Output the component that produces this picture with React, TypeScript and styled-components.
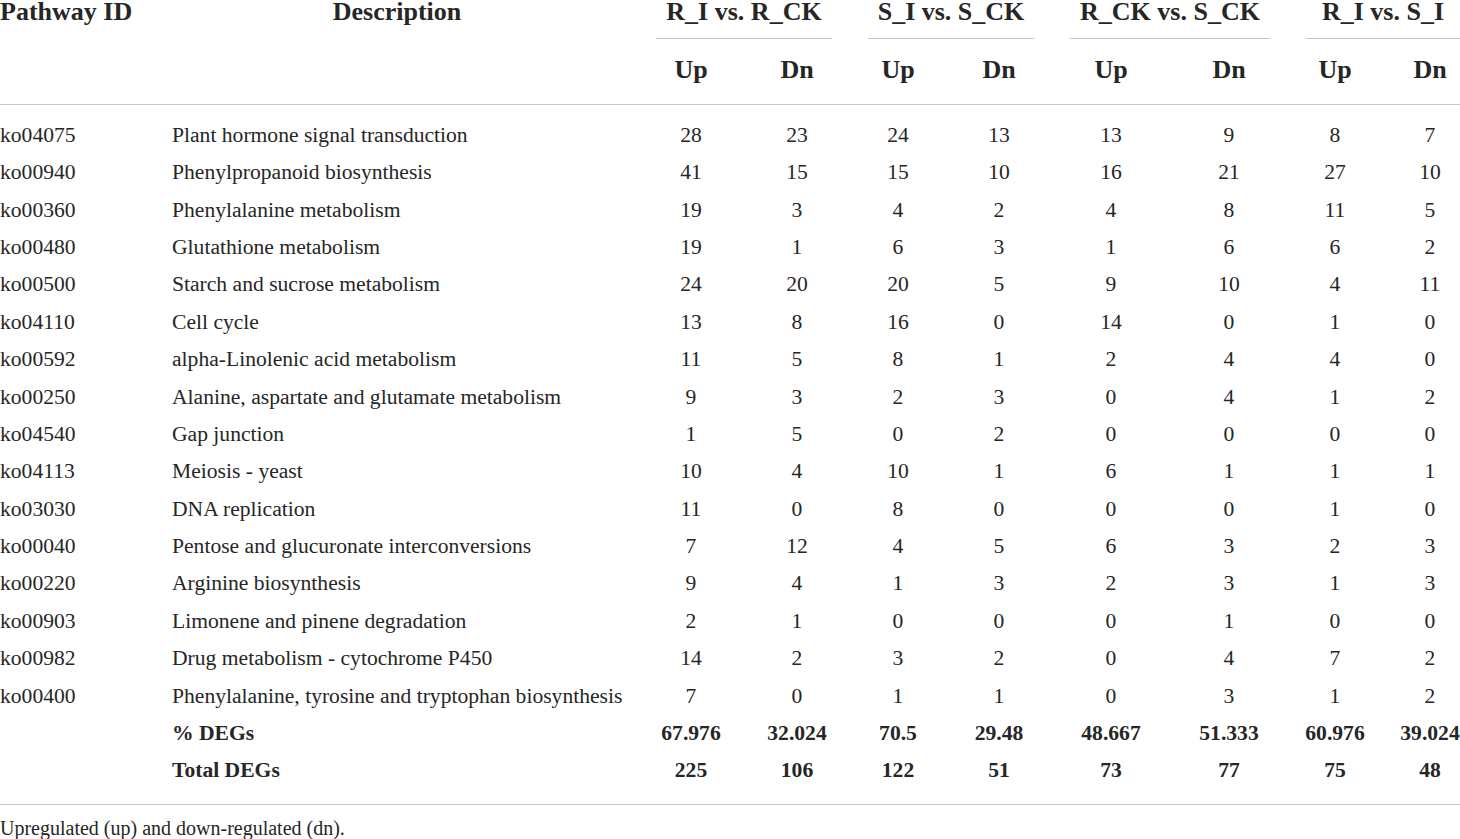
import React from "react";
import styled, { createGlobalStyle } from "styled-components";

const COLS = "172px 466px 106px 106px 96px 106px 118px 118px 94px 96px";
const RULE = "1.5px solid #c6c6c6";
const INK = "#262626";

const GlobalStyle = createGlobalStyle`
  html, body {
    margin: 0;
    padding: 0;
    background: #fff;
    overflow: hidden;
  }
  body {
    font-family: "Liberation Serif", "Times New Roman", serif;
    color: ${INK};
  }
`;

const Page = styled.div`
  width: 1478px;
`;

const Head = styled.div`
  display: grid;
  grid-template-columns: ${COLS};
  grid-template-rows: 38.5px 65.5px;
  border-bottom: ${RULE};
  font-size: 26px;
  font-weight: 700;
  line-height: 24px;
`;

const HeadCell = styled.div<{ $center?: boolean; $pad?: number }>`
  grid-row: 1 / 3;
  text-align: ${(p) => (p.$center ? "center" : "left")};
  padding-right: ${(p) => p.$pad ?? 0}px;
`;

const GroupLabel = styled.div`
  grid-column: span 2;
  grid-row: 1;
  margin: 0 18px;
  padding-bottom: 13px;
  text-align: center;
  white-space: nowrap;
  border-bottom: ${RULE};
`;

const SubCell = styled.div`
  grid-row: 2;
  align-self: center;
  text-align: center;
  padding-bottom: 3px;
`;

const Body = styled.div`
  display: grid;
  grid-template-columns: ${COLS};
  grid-auto-rows: 37.4px;
  padding: 11.8px 0 14.5px;
  border-bottom: ${RULE};
  font-size: 21.6px;
  line-height: 37.4px;
`;

const Cell = styled.div<{ $num?: boolean; $bold?: boolean }>`
  text-align: ${(p) => (p.$num ? "center" : "left")};
  font-weight: ${(p) => (p.$bold ? 700 : 400)};
  white-space: nowrap;
`;

const Note = styled.div`
  padding-top: 11px;
  font-size: 20px;
  line-height: 24px;
`;

type Row = [string, string, ...(number | string)[]];

const rows: Row[] = [
  ["ko04075", "Plant hormone signal transduction", 28, 23, 24, 13, 13, 9, 8, 7],
  ["ko00940", "Phenylpropanoid biosynthesis", 41, 15, 15, 10, 16, 21, 27, 10],
  ["ko00360", "Phenylalanine metabolism", 19, 3, 4, 2, 4, 8, 11, 5],
  ["ko00480", "Glutathione metabolism", 19, 1, 6, 3, 1, 6, 6, 2],
  ["ko00500", "Starch and sucrose metabolism", 24, 20, 20, 5, 9, 10, 4, 11],
  ["ko04110", "Cell cycle", 13, 8, 16, 0, 14, 0, 1, 0],
  ["ko00592", "alpha-Linolenic acid metabolism", 11, 5, 8, 1, 2, 4, 4, 0],
  ["ko00250", "Alanine, aspartate and glutamate metabolism", 9, 3, 2, 3, 0, 4, 1, 2],
  ["ko04540", "Gap junction", 1, 5, 0, 2, 0, 0, 0, 0],
  ["ko04113", "Meiosis - yeast", 10, 4, 10, 1, 6, 1, 1, 1],
  ["ko03030", "DNA replication", 11, 0, 8, 0, 0, 0, 1, 0],
  ["ko00040", "Pentose and glucuronate interconversions", 7, 12, 4, 5, 6, 3, 2, 3],
  ["ko00220", "Arginine biosynthesis", 9, 4, 1, 3, 2, 3, 1, 3],
  ["ko00903", "Limonene and pinene degradation", 2, 1, 0, 0, 0, 1, 0, 0],
  ["ko00982", "Drug metabolism - cytochrome P450", 14, 2, 3, 2, 0, 4, 7, 2],
  ["ko00400", "Phenylalanine, tyrosine and tryptophan biosynthesis", 7, 0, 1, 1, 0, 3, 1, 2],
];

const summary: Row[] = [
  ["", "% DEGs", "67.976", "32.024", "70.5", "29.48", "48.667", "51.333", "60.976", "39.024"],
  ["", "Total DEGs", 225, 106, 122, 51, 73, 77, 75, 48],
];

const groups = ["R_I vs. R_CK", "S_I vs. S_CK", "R_CK vs. S_CK", "R_I vs. S_I"];

const TableRow: React.FC<{ row: Row; bold?: boolean }> = ({ row, bold }) => {
  const [id, desc, ...vals] = row;
  return (
    <>
      <Cell>{id}</Cell>
      <Cell $bold={bold}>{desc}</Cell>
      {vals.map((v, i) => (
        <Cell key={i} $num $bold={bold}>
          {v}
        </Cell>
      ))}
    </>
  );
};

export default function App() {
  return (
    <Page>
      <GlobalStyle />
      <Head>
        <HeadCell>Pathway ID</HeadCell>
        <HeadCell $center $pad={16}>
          Description
        </HeadCell>
        {groups.map((g) => (
          <GroupLabel key={g}>{g}</GroupLabel>
        ))}
        {groups.map((g) => (
          <React.Fragment key={g}>
            <SubCell>Up</SubCell>
            <SubCell>Dn</SubCell>
          </React.Fragment>
        ))}
      </Head>
      <Body>
        {rows.map((r) => (
          <TableRow key={r[0]} row={r} />
        ))}
        {summary.map((r) => (
          <TableRow key={r[1]} row={r} bold />
        ))}
      </Body>
      <Note>Upregulated (up) and down-regulated (dn).</Note>
    </Page>
  );
}
